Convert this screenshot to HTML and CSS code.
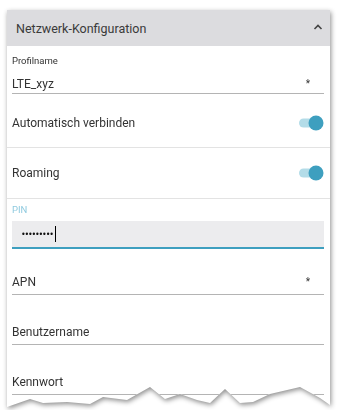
FILE: index.html
```html
<!DOCTYPE html>
<html lang="de">
<head>
<meta charset="utf-8">
<link rel="stylesheet" href="styles.css">
</head>
<body>
<div class="wrap">
  <div class="card">
    <div class="header">
      <span class="title">Netzwerk-Konfiguration</span>
      <svg class="chev" width="10" height="6" viewBox="0 0 10 6"><polyline points="1.5,5 5,1.5 8.5,5" fill="none" stroke="#444" stroke-width="1.6"/></svg>
    </div>
    <div class="field profil">
      <div class="label">Profilname</div>
      <div class="line"><span>LTE_xyz</span><span class="req">*</span></div>
    </div>
    <div class="row first">
      <span>Automatisch verbinden</span>
      <svg class="toggle" width="26" height="16" viewBox="0 0 26 16"><rect x="1" y="3.5" width="20" height="9" rx="4.5" fill="#b3dce8"/><circle cx="18" cy="8" r="7.5" fill="#3e9fbf"/></svg>
    </div>
    <div class="row">
      <span>Roaming</span>
      <svg class="toggle" width="26" height="16" viewBox="0 0 26 16"><rect x="1" y="3.5" width="20" height="9" rx="4.5" fill="#b3dce8"/><circle cx="18" cy="8" r="7.5" fill="#3e9fbf"/></svg>
    </div>
    <div class="field pin">
      <div class="label blue">PIN</div>
      <div class="pinbox"><span class="dots">•••••••••</span><span class="cursor"></span></div>
    </div>
    <div class="field plain first-plain"><div class="line"><span>APN</span><span class="req">*</span></div></div>
    <div class="field plain"><div class="line"><span>Benutzername</span></div></div>
    <div class="field plain"><div class="line"><span>Kennwort</span></div></div>
  </div>
</div>
</body>
</html>
```
FILE: styles.css
```css
html, body { margin: 0; padding: 0; background: #fff; }
body { font-family: Roboto, "Noto Sans", sans-serif; color: #333; }
.wrap {
  padding: 10px 0 0 7px;
  filter: drop-shadow(1px 2px 2.5px rgba(0,0,0,0.45));
}
.card {
  width: 323px;
  height: 400px;
  background: #fff;
  display: flex;
  flex-direction: column;
  clip-path: polygon(0 0, 323px 0, 323px 395px, 313px 388px, 293px 377px, 263px 384px, 246px 392px, 233px 393px, 218px 379px, 203px 393px, 190px 390px, 173px 384px, 158px 389px, 143px 377px, 120px 390px, 96px 387px, 83px 394px, 60px 392px, 36px 393px, 23px 389px, 0 397px);
}
.header {
  height: 36px;
  background: #dcdcdf;
  display: flex;
  align-items: center;
  justify-content: space-between;
  padding: 0 7px 0 9px;
  flex-shrink: 0;
}
.title { font-size: 12.5px; color: #3a3a3a; }
.chev { margin-top: -2px; }
.field { padding: 0 6px 0 5px; }
.label { font-size: 9.5px; line-height: 12px; color: #333; }
.label.blue { color: #8fcadf; }
.line {
  display: flex;
  justify-content: space-between;
  align-items: center;
  font-size: 12px;
  line-height: 16px;
  border-bottom: 1px solid #b4b4b4;
}
.req { font-size: 10px; margin-right: 14px; }
.profil .label { margin-top: 9px; }
.profil .line { margin-top: 9px; padding-bottom: 1px; }
.row {
  height: 50px;
  display: flex;
  align-items: center;
  justify-content: space-between;
  padding: 0 6px 0 5px;
  font-size: 12px;
  border-bottom: 1px solid #e3e3e3;
}
.row.first { box-sizing: border-box; height: 54px; padding-top: 4px; }
.toggle { display: block; }
.pin .label { margin-top: 5px; }
.pinbox {
  margin-top: 5px;
  height: 26px;
  background: #ececee;
  border-bottom: 2px solid #3e9fbf;
  display: flex;
  align-items: center;
  padding-left: 9px;
}
.dots { font-size: 8px; letter-spacing: -1.2px; color: #111; font-family: "DejaVu Sans", sans-serif; }
.cursor { width: 1px; height: 16px; background: #000; margin-left: 2px; }
.plain { height: 50px; display: flex; flex-direction: column; justify-content: flex-end; }
.plain.first-plain { height: 46px; }
.plain .line { padding-bottom: 4px; }
```
